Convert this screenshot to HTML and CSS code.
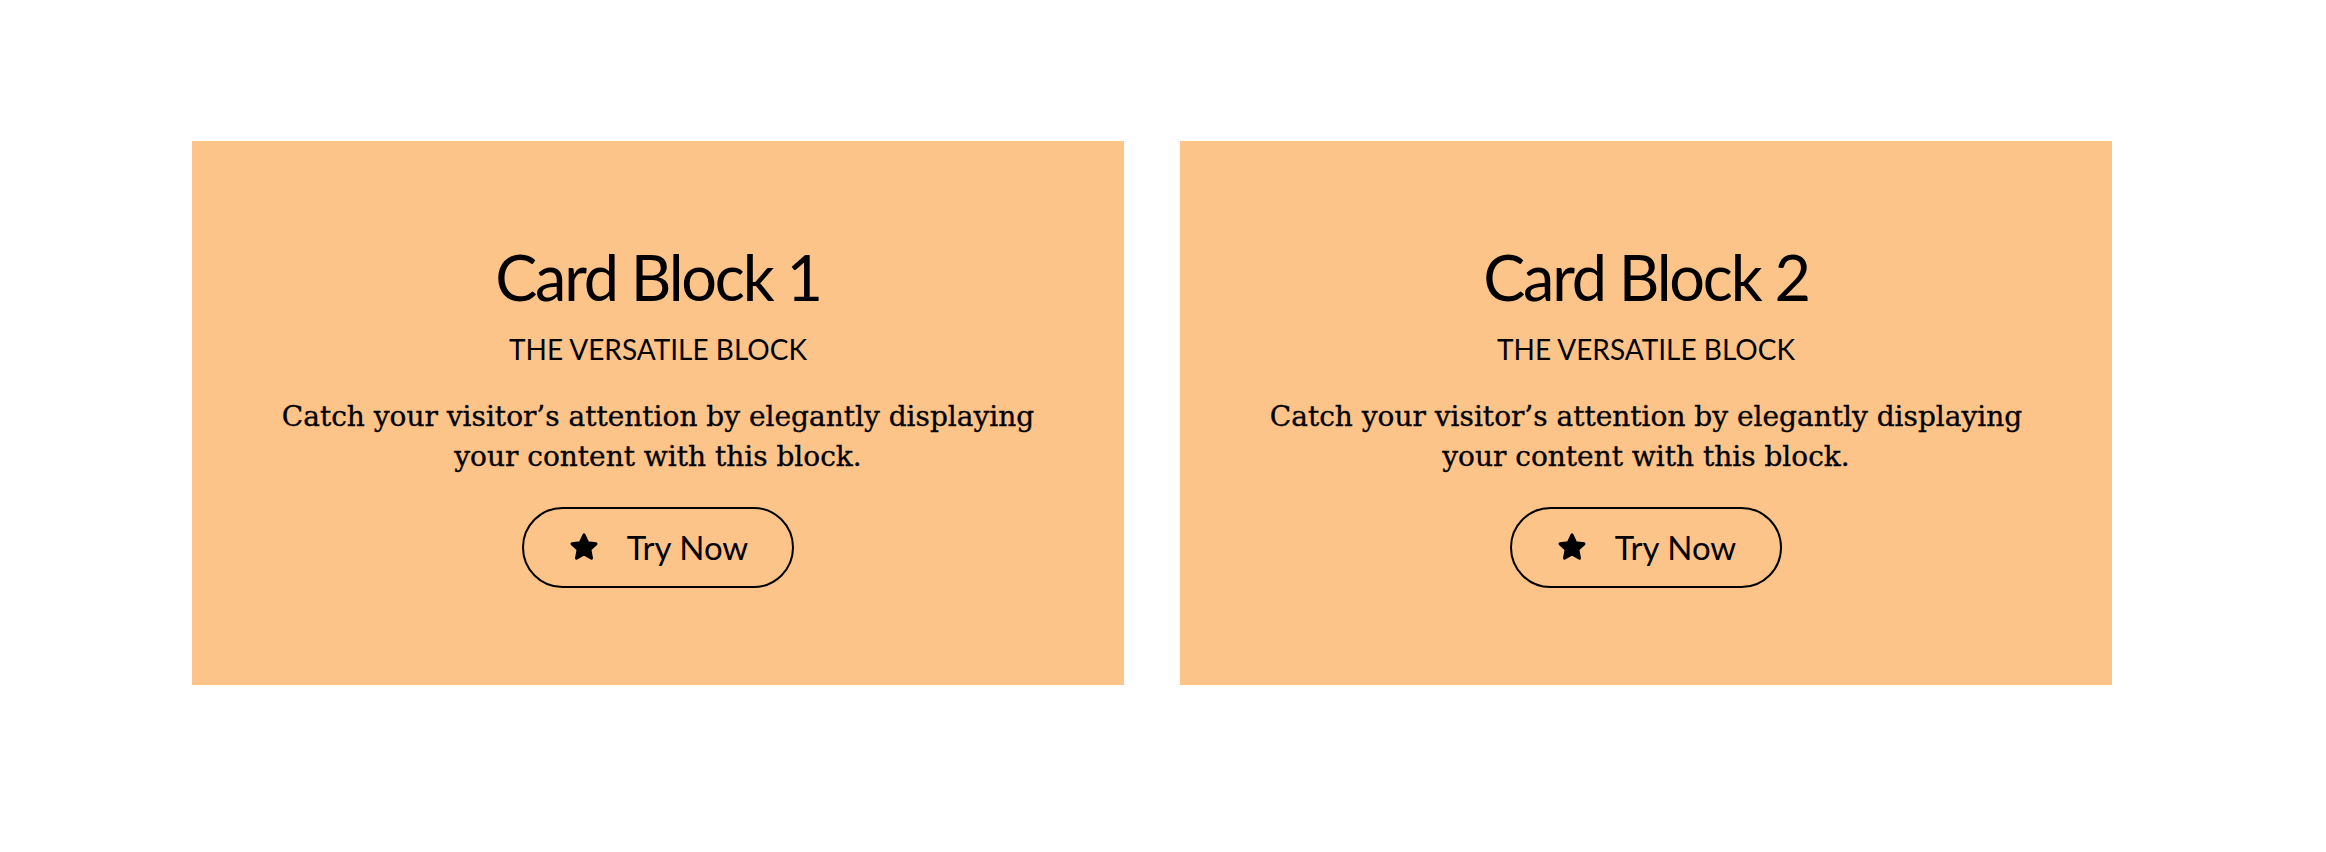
FILE: index.html
```html
<!DOCTYPE html>
<html lang="en">
<head>
<meta charset="utf-8">
<title>Card Blocks</title>
<link rel="stylesheet" href="styles.css">
</head>
<body>
<main class="cards">
  <section class="card">
    <h2 class="card-title">Card Block 1</h2>
    <p class="card-subtitle">THE VERSATILE BLOCK</p>
    <p class="card-text">Catch your visitor’s attention by elegantly displaying your content with this block.</p>
    <a class="card-button" href="#">
      <svg class="star" viewBox="0 0 32 30" aria-hidden="true"><path d="M16 2.8 L19.8 10.8 L28 11.8 L21.9 17.5 L23.5 26.2 L16 21.9 L8.5 26.2 L10.1 17.5 L4 11.8 L12.2 10.8 Z"/></svg>
      <span>Try Now</span>
    </a>
  </section>
  <section class="card">
    <h2 class="card-title">Card Block 2</h2>
    <p class="card-subtitle">THE VERSATILE BLOCK</p>
    <p class="card-text">Catch your visitor’s attention by elegantly displaying your content with this block.</p>
    <a class="card-button" href="#">
      <svg class="star" viewBox="0 0 32 30" aria-hidden="true"><path d="M16 2.8 L19.8 10.8 L28 11.8 L21.9 17.5 L23.5 26.2 L16 21.9 L8.5 26.2 L10.1 17.5 L4 11.8 L12.2 10.8 Z"/></svg>
      <span>Try Now</span>
    </a>
  </section>
</main>
</body>
</html>
```
FILE: styles.css
```css
html, body {
  margin: 0;
  padding: 0;
  background: #ffffff;
}

body {
  font-family: Lato, "Liberation Sans", sans-serif;
  color: #000;
}

.cards {
  display: grid;
  grid-template-columns: 932px 932px;
  column-gap: 56px;
  padding: 141px 0 0 192px;
}

.card {
  height: 544px;
  box-sizing: border-box;
  background: #fdc48a;
  padding-top: 98px;
  display: flex;
  flex-direction: column;
  align-items: center;
  text-align: center;
}

.card-title {
  margin: 0;
  font-family: Lato, sans-serif;
  font-weight: 400;
  font-size: 63px;
  line-height: 76px;
  letter-spacing: -2.2px;
}

.card-subtitle {
  margin: 18px 0 0;
  font-family: Lato, sans-serif;
  font-size: 28px;
  line-height: 1.2;
}

.card-text {
  margin: 30px 0 0;
  max-width: 790px;
  font-family: "DejaVu Serif", "Liberation Serif", serif;
  font-size: 28px;
  line-height: 40px;
  -webkit-text-stroke: 0.35px #000;
}

.card-button {
  margin-top: 30px;
  height: 81px;
  box-sizing: border-box;
  border: 2px solid #000;
  border-radius: 41px;
  display: flex;
  align-items: center;
  padding: 0 44px;
  gap: 27px;
  color: #000;
  text-decoration: none;
  white-space: nowrap;
  font-family: Lato, sans-serif;
  font-size: 33px;
}

.star {
  width: 32px;
  height: 30px;
  flex: none;
}

.star path {
  fill: #000;
  stroke: #000;
  stroke-width: 3;
  stroke-linejoin: round;
}
```
